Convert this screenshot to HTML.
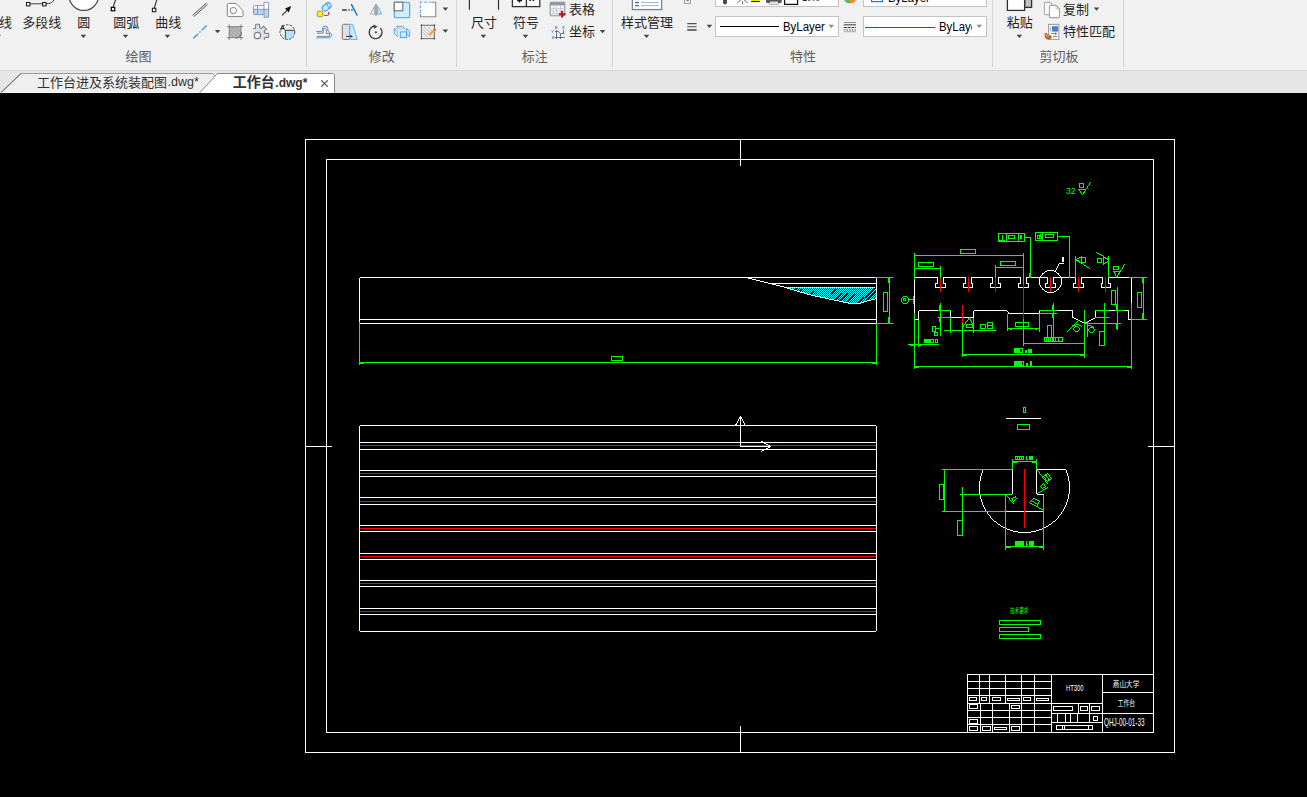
<!DOCTYPE html>
<html lang="zh"><head><meta charset="utf-8"><title>工作台.dwg</title>
<style>
html,body{margin:0;padding:0;background:#000;}
body{width:1307px;height:797px;overflow:hidden;position:relative;font-family:"Liberation Sans",sans-serif;}
#ribbon{position:absolute;left:0;top:0;width:1307px;height:70px;background:#f1f1f1;}
#ribbon .sep{position:absolute;top:0;width:1px;height:67px;background:#d2d2d2;}
#tabbar{position:absolute;left:0;top:70px;width:1307px;height:23px;background:#e6e6e6;border-top:1px solid #d9d9d9;box-sizing:border-box;}
.combo{position:absolute;box-sizing:border-box;background:#fff;border:1px solid #c3c3c3;}
.lat{position:absolute;white-space:nowrap;color:#000;line-height:1;}
.sq{display:inline-block;transform:scaleX(.95);transform-origin:0 0;}
#overlay{position:absolute;left:0;top:0;width:1307px;height:93px;}
#canvas{position:absolute;left:0;top:93px;width:1307px;height:704px;background:#000;}
#cad{position:absolute;left:0;top:0;width:1307px;height:797px;}
</style></head>
<body>
<div id="ribbon">
<div class="sep" style="left:306px"></div><div class="sep" style="left:456px"></div><div class="sep" style="left:612px"></div><div class="sep" style="left:992px"></div><div class="sep" style="left:1123px"></div><div class="combo" style="left:715px;top:-14px;width:124px;height:21px"></div><div class="combo" style="left:715px;top:16px;width:124px;height:21px"></div><div class="combo" style="left:863px;top:-14px;width:124px;height:21px"></div><div class="combo" style="left:863px;top:16px;width:124px;height:21px"></div><div class="lat" style="left:783.1px;top:20.5px;font-size:12px"><span class="sq">ByLayer</span></div><div class="lat" style="left:938.9px;top:20.5px;font-size:12px;width:32.8px;height:16px;overflow:hidden"><span class="sq">ByLayer</span></div><div class="lat" style="left:888.1px;top:-7.6px;font-size:12px"><span class="sq">ByLayer</span></div>
</div>
<div id="tabbar"></div>
<div id="canvas"></div>
<svg id="overlay" width="1307" height="93" viewBox="0 0 1307 93">
<g font-family="'Liberation Sans', 'Noto Sans CJK SC', sans-serif" font-size="13px" fill="#262626">
<text x="-1" y="26.5">线</text>
<text x="22.3" y="26.5">多段线</text>
<text x="77.3" y="26.5">圆</text>
<text x="113.3" y="26.5">圆弧</text>
<text x="155.3" y="26.5">曲线</text>
<text x="471" y="26.5">尺寸</text>
<text x="513" y="26.5">符号</text>
<text x="621" y="26.5">样式管理</text>
<text x="1006.7" y="26.5">粘贴</text>
<text x="569" y="13.9">表格</text>
<text x="569" y="35.8">坐标</text>
<text x="1063" y="13.9">复制</text>
<text x="1063" y="35.8">特性匹配</text>
</g>
<g font-family="'Liberation Sans', 'Noto Sans CJK SC', sans-serif" font-size="13px" fill="#5f5f5f">
<text x="125.5" y="61.3">绘图</text>
<text x="368.7" y="61.3">修改</text>
<text x="521.8" y="61.3">标注</text>
<text x="790" y="61.3">特性</text>
<text x="1039.5" y="61.3">剪切板</text>
</g>
<path d="M-4.5 34.8H1.1L-1.7 38Z" fill="#444"/>
<path d="M80.6 34.8H86.2L83.4 38Z" fill="#444"/>
<path d="M122.7 34.8H128.3L125.5 38Z" fill="#444"/>
<path d="M164.6 34.8H170.2L167.4 38Z" fill="#444"/>
<path d="M480.6 34.8H486.2L483.4 38Z" fill="#444"/>
<path d="M522.6 34.8H528.2L525.4 38Z" fill="#444"/>
<path d="M643.7 34.8H649.3L646.5 38Z" fill="#444"/>
<path d="M1016.6 34.8H1022.2L1019.4 38Z" fill="#444"/>
<path d="M214.8 30H220.4L217.6 33.2Z" fill="#444"/>
<path d="M442.6 7.6H448.2L445.4 10.8Z" fill="#444"/>
<path d="M442.6 29.6H448.2L445.4 32.8Z" fill="#444"/>
<path d="M599.7 30H605.3L602.5 33.2Z" fill="#444"/>
<path d="M706.6 24.7H712.2L709.4 27.9Z" fill="#444"/>
<path d="M1093.7 7.6H1099.3L1096.5 10.8Z" fill="#444"/>
<path d="M828.5 24.7H834.1L831.3 27.9Z" fill="#8a8a8a"/>
<path d="M976.5 24.7H982.1L979.3 27.9Z" fill="#8a8a8a"/>
<path d="M720 26.5H779" stroke="#000" stroke-width="1.2"/>
<path d="M865 27.5H935" stroke="#f00" stroke-width="1.2"/>
<path d="M0 94L21 73.5H212.5L214.5 75.5V94Z" fill="#efefef" stroke="#9c9c9c" stroke-width="1"/><path d="M0.4 93L20.8 73.6" stroke="#5a5a5a" stroke-width="0.9" fill="none"/><path d="M1.5 92.5H200" stroke="#fbfbfb" stroke-width="1"/>
<path d="M198.6 94L217.5 73.5H332.5Q334.5 73.5 334.5 75.5V94Z" fill="#fff" stroke="#8a8a8a" stroke-width="1"/>
<text x="37" y="86.5" font-family="'Liberation Sans', 'Noto Sans CJK SC', sans-serif" font-size="13px" fill="#333">工作台进及系统装配图</text>
<text x="232.7" y="86.6" font-family="'Liberation Sans', 'Noto Sans CJK SC', sans-serif" font-size="14px" font-weight="bold" fill="#333">工作台</text>
<text x="167.5" y="86.3" font-family="Liberation Sans, sans-serif" font-size="12.5px" fill="#333">.dwg*</text>
<text x="275.3" y="86.6" font-family="Liberation Sans, sans-serif" font-size="12px" font-weight="bold" fill="#333">.dwg*</text>
<path d="M321.2 80.3L327.8 86.8M327.8 80.3L321.2 86.8" stroke="#666" stroke-width="1.3" fill="none"/>
<path d="M29.5 3.8H42.5M46 3.8C50 3.8 53.5 2.5 54.3 -1" fill="none" stroke="#3a3f46" stroke-width="1"/>
<rect x="26.5" y="2.5" width="3.4" height="3.4" fill="#fff" stroke="#222" stroke-width="1.1"/><rect x="42.6" y="2.5" width="3.4" height="3.4" fill="#fff" stroke="#222" stroke-width="1.1"/>
<circle cx="83.8" cy="-4.4" r="14.8" fill="#fff" stroke="#3a3f46" stroke-width="1.2"/>
<path d="M113 7.5L115.8 -1M154.2 8.5L157 -1" fill="none" stroke="#3a3f46" stroke-width="1.2"/>
<rect x="111.3" y="7.4" width="3.4" height="3.4" fill="#fff" stroke="#111" stroke-width="1.3"/><rect x="152.4" y="8.3" width="3.4" height="3.4" fill="#fff" stroke="#222" stroke-width="1.1"/>
<path d="M192.6 15.4L206.4 3M193.8 16.6L207.6 4.2" fill="none" stroke="#4c4c4c" stroke-width="0.95"/>
<path d="M193.2 38.6L206.8 25.2" fill="none" stroke="#2aa6e6" stroke-width="1.4" stroke-dasharray="7 1.6 1.6 1.6"/>
<path d="M228.5 3.4H236L243 10.6V15.4Q243 16.6 241.8 16.6H228.5Q227.3 16.6 227.3 15.4V4.6Q227.3 3.4 228.5 3.4Z" fill="#fff" stroke="#808488" stroke-width="1"/><circle cx="233.3" cy="10.6" r="3.2" fill="none" stroke="#808488" stroke-width="1"/>
<rect x="229.3" y="26.8" width="11.6" height="10.8" fill="#b4b8bc"/><path d="M231 26.8L240.9 36M234.5 26.8L240.9 32.6M229.3 29L238.6 37.6M229.3 32.6L234.6 37.6" stroke="#94999e" stroke-width="0.8" fill="none"/>
<path d="M227 26.7H243.2M227 37.7H243.2M229.2 24.4V39.8M241 24.4V39.8" stroke="#666b70" stroke-width="0.8" fill="none"/><path d="M235.5 38.4Q240.6 37.6 241.6 32" stroke="#666b70" stroke-width="0.8" fill="none"/>
<path d="M254.6 5.6H264V2.4H268.6V9.3H253.5V6.7Q253.5 5.6 254.6 5.6Z" fill="#fff"/><path d="M253.5 9.3H268.6V17.2H264V14.6H254.6Q253.5 14.6 253.5 13.5Z" fill="#b9d4f0"/>
<path d="M254.6 5.6H264V2.4H268.6V17.2H264V14.6H254.6Q253.5 14.6 253.5 13.5V6.7Q253.5 5.6 254.6 5.6ZM264 5.6V14.6M257.5 5.6V14.6" fill="none" stroke="#8e9aac" stroke-width="1"/><path d="M253 9.3H269" stroke="#5aa0ee" stroke-width="1"/>
<path d="M253.2 28.5H255.1Q255.6 28.5 255.6 27.9V25Q255.6 24.2 256.4 24.2H258.8Q259.6 24.2 259.6 25V27.6Q260.2 28.4 261.4 28.4L263.5 26.3L266.7 29.4L264.4 30.6V32.6Q264.6 33.4 265.6 33.4H268Q268.7 33.4 268.7 34.1V36.7Q268.7 37.4 268 37.4H265.6Q264.6 37.6 264.4 38.7V39.7H253.2Z" fill="#dde1ea"/><path d="M253.2 28.5H255.1Q255.6 28.5 255.6 27.9V25Q255.6 24.2 256.4 24.2H258.8Q259.6 24.2 259.6 25V27.6Q260.2 28.4 261.4 28.4L263.5 26.3L266.7 29.4L264.4 30.6V32.6Q264.6 33.4 265.6 33.4H268Q268.7 33.4 268.7 34.1V36.7Q268.7 37.4 268 37.4H265.6Q264.6 37.6 264.4 38.7V39.7" fill="none" stroke="#7c818a" stroke-width="1.1"/><circle cx="257.4" cy="35.5" r="3.1" fill="#fff" stroke="#777b82" stroke-width="1.2"/>
<path d="M282.2 15.4L288 9.4" stroke="#333" stroke-width="1.1" fill="none"/><path d="M291.2 6L285 8.6L288.8 12.4Z" fill="#111"/>
<path d="M285.4 30.4H294.7A7.5 7.5 0 0 1 285.4 39.3Z" fill="#b4e4fa"/><circle cx="287.4" cy="32.1" r="7.4" fill="none" stroke="#333" stroke-width="0.9" stroke-dasharray="2.4 1.3"/><path d="M285.4 39.3V30.4H294.7" fill="none" stroke="#555" stroke-width="1.1"/>
<text x="280.2" y="29.6" font-family="Liberation Sans, sans-serif" font-size="6.5px" font-weight="bold" fill="#222">A</text>
<rect x="317.3" y="11.2" width="5.6" height="5.5" rx="1.5" fill="#ffee00" stroke="#8c8c50" stroke-width="0.9"/>
<g transform="translate(326.6 6.9) rotate(-36)"><rect x="-4.7" y="-2.9" width="9.4" height="5.8" rx="2.5" fill="#c6e8fb" stroke="#3c96e6" stroke-width="1"/><path d="M1.6 -2.8V2.8" stroke="#3c96e6" stroke-width="0.9"/></g>
<path d="M324.2 15.4H327.4Q328.7 15.4 328.7 14.2V13.4" fill="none" stroke="#a03434" stroke-width="1"/><path d="M327.3 13.6L328.8 11.7L330.2 13.6Z" fill="#a03434"/>
<rect x="342.1" y="9" width="4.7" height="2" fill="#666"/><rect x="348.1" y="9" width="1.7" height="2" fill="#4a90e0"/><rect x="351.1" y="9" width="1.7" height="2" fill="#4a90e0"/><path d="M351.2 4.2L357.3 15.5" stroke="#1a6ad0" stroke-width="1.4"/>
<path d="M370.6 14L374.7 6.2V14Z" fill="#fff" stroke="#9a9a9a" stroke-width="0.9"/><rect x="375" y="4" width="2" height="11.6" fill="#b4b4b4"/><path d="M375.2 4V15.6M376.9 4V15.6" stroke="#8e8e8e" stroke-width="0.4"/><path d="M377.4 5.9L381.6 14H377.4Z" fill="#c8eafc" stroke="#5aa8ea" stroke-width="0.9"/>
<rect x="394.3" y="2.2" width="15.4" height="15.5" rx="1.7" fill="#cdeefd" stroke="#4aa0e6" stroke-width="1.1"/><rect x="394.3" y="2.2" width="8.5" height="8.6" fill="#fff" stroke="#6a7078" stroke-width="1.1"/>
<rect x="420.3" y="2.2" width="15.4" height="14.6" fill="#fff"/><path d="M420.4 13V2.3H431.6" fill="none" stroke="#58a8f0" stroke-width="1.1" stroke-dasharray="3 1.8"/><path d="M432 2.3H435.7V16.8H420.4V14" fill="none" stroke="#8a8a8a" stroke-width="1.1"/>
<path d="M316.2 31.5H321.4Q322.4 31.4 322.4 30.2V28.2Q322.6 26.1 325.2 26.1Q327.8 26.1 327.8 28.2V31L331.6 34.1Q331.9 35.4 331.4 36.2L330.2 37.5Q329.8 37.8 329.2 37.8H316.2" fill="#e8f3fb" stroke="#4a9ae0" stroke-width="1"/>
<path d="M317 33.2H323.3V29.3Q323.3 28.4 324.2 28.4H325.4Q326.2 28.4 326.2 29.3V33.7H329.6V36.3H317" fill="#fff" stroke="#6c6c6c" stroke-width="0.9"/>
<rect x="342.3" y="24.3" width="7.6" height="15.2" rx="1.2" fill="#e0e0e0" stroke="#777" stroke-width="1"/><path d="M349.8 24.3H352.6L357.2 39.5H349.8Z" fill="#c8eafc" stroke="#5ab0f0" stroke-width="0.9"/><path d="M346.1 36.4H351.4" stroke="#333" stroke-width="1"/><path d="M353 36.4L350.6 35V37.8Z" fill="#333"/>
<path d="M380.3 27.9A6.4 6.4 0 1 1 374.2 26" fill="none" stroke="#3a424c" stroke-width="1.4"/><path d="M373.5 24.6L377.6 26.5L374 28.9Z" fill="#3a424c"/><circle cx="375.9" cy="32.3" r="1.1" fill="#3a424c"/>
<path d="M396.3 26.4H402.6L404.9 29.3H398.9Z" fill="#cdeefd" stroke="#4a9ae0" stroke-width="0.9"/><path d="M394.3 28.4L397.6 31.3V36.7L394.3 33.3Z" fill="#cdeefd" stroke="#4a9ae0" stroke-width="0.9"/><path d="M406.6 28.4L409.7 31.3V36.7L406.6 33.9Z" fill="#cdeefd" stroke="#4a9ae0" stroke-width="0.9"/><path d="M397.6 31.3L400.3 31.9V37L397.6 36.7ZM398.9 29.3H404.9L406.6 31.9H400.3Z" fill="#e2f1fa"/><rect x="400.3" y="31.9" width="6.3" height="5.7" fill="#cdeefd" stroke="#4a9ae0" stroke-width="0.9"/>
<rect x="421.5" y="25.3" width="12.9" height="13.3" fill="#ececec"/><path d="M424 26.8L432.6 35M427.4 26.8L432.6 31.6M423 29.2L431.2 37M423 32.6L427.6 37" stroke="#bcbcbc" stroke-width="0.9" fill="none"/><rect x="421.5" y="25.3" width="12.9" height="13.3" fill="none" stroke="#777" stroke-width="1.1"/>
<path d="M421.5 24.4V26M434.4 24.4V26M421.5 37.8V39.4M434.4 37.8V39.4M420.6 25.3H422.2M433.6 25.3H435.2M420.6 38.6H422.2M433.6 38.6H435.2" stroke="#555" stroke-width="1" fill="none"/>
<path d="M429.9 34.5L434.6 29.8" stroke="#f5a623" stroke-width="2.3"/><path d="M434.3 30.1L435.4 29" stroke="#b0662a" stroke-width="2.3"/><path d="M430.2 34.2L428.6 35.6" stroke="#aaa" stroke-width="1"/>
<path d="M469.4 -1V9.8M498.5 -1V9.8" stroke="#333" stroke-width="1.2" fill="none"/>
<rect x="512.4" y="-6" width="27.4" height="12.6" fill="#fff" stroke="#333" stroke-width="1.3"/><path d="M526.4 -2V6.6" stroke="#333" stroke-width="1.3"/><path d="M519.5 -1V2.6M517.2 0.6H522" stroke="#111" stroke-width="1.4"/><rect x="529.4" y="-1" width="1.6" height="2" fill="#111"/><rect x="532.6" y="-1" width="1.6" height="2" fill="#111"/>
<rect x="550.2" y="2.3" width="14.6" height="13.4" rx="1" fill="#fff" stroke="#8a9098" stroke-width="1.1"/><path d="M550.2 5.5V3.3Q550.2 2.3 551.2 2.3H563.8Q564.8 2.3 564.8 3.3V5.5Z" fill="#8d96a2"/><path d="M550.8 8.4H564.2M550.8 10.8H564.2M550.8 13.4H564.2M553.4 5.6V15.4M556.5 5.6V15.4M560.5 5.6V15.4" stroke="#c6cace" stroke-width="1" fill="none"/>
<path d="M562.1 10.9V17.6M558.8 14.2H565.6" stroke="#b81418" stroke-width="2" fill="none"/>
<path d="M556.5 30.1V39M560.4 33.7V39M555 31.5H558.2L560.8 33.7L564.6 33.2M563.5 30.1V33.2M555 37.5H564.8" stroke="#565a60" stroke-width="0.85" fill="none"/>
<g font-family="Liberation Sans, sans-serif" font-size="4.4px" font-weight="bold" fill="#4a90e2"><text x="554.7" y="29">E</text><text x="561.8" y="29">X</text><text x="551.1" y="32.9">Y</text><text x="551.8" y="39">E</text></g>
<rect x="632.4" y="-6" width="29.2" height="15.6" fill="#fff" stroke="#6a86a8" stroke-width="1.3"/><path d="M635 2.6H639M635 5.6H639" stroke="#4a6a92" stroke-width="1.3"/><path d="M641 2.6H658.8M641 5.6H658.8" stroke="#9db3cd" stroke-width="1"/>
<rect x="684.4" y="-3" width="6" height="6.4" fill="#f8f8f8" stroke="#9a9a9a" stroke-width="1"/><rect x="686" y="-1" width="2.8" height="2.2" fill="#8a8a8a"/>
<path d="M687.2 23.6H696.6M687.2 26.8H696.6" stroke="#505050" stroke-width="1.05"/><path d="M687.2 30H696.6" stroke="#444" stroke-width="1.5"/>
<path d="M723 -1V2.6Q723 4.6 725 4.6Q727 4.6 727 2.6V-1Z" fill="#4a4a4a"/>
<path d="M737.2 3L741.4 -0.6H743.6L747.8 3M742.5 1.4V4.2" stroke="#555" stroke-width="0.9" fill="none"/>
<rect x="751.2" y="-1" width="8.6" height="2" fill="#f2e400"/><rect x="751.2" y="1" width="8.6" height="1.1" fill="#2a2a2a"/>
<path d="M766 -1V1.4Q766 3 767.8 3H769.4V4.6H778.4V3H780Q781.8 3 781.8 1.4V-1Z" fill="#555"/><rect x="769.8" y="1.6" width="8.2" height="2.6" fill="#dfe3e8"/>
<rect x="784.6" y="-4" width="13" height="8.4" fill="#fff" stroke="#111" stroke-width="1.3"/>
<path d="M844 -0.5A6 6 0 0 0 850 3.3V-0.5Z" fill="#5cb85c"/><path d="M856 -0.5A6 6 0 0 1 850 3.3V-0.5Z" fill="#f08a24"/>
<rect x="871.6" y="-8" width="11" height="9.6" fill="#fff" stroke="#1f73d6" stroke-width="1.2"/>
<path d="M843.8 22.5H856" stroke="#8a8a8a" stroke-width="0.9"/><path d="M843.8 24.8H856" stroke="#4a4a4a" stroke-width="1.1"/><path d="M843.8 27.5H856" stroke="#3a3a3a" stroke-width="1.2" stroke-dasharray="3 0.8"/><path d="M843.8 29.9H856" stroke="#666" stroke-width="1" stroke-dasharray="1.6 1"/><path d="M843.8 31.7H856" stroke="#999" stroke-width="0.8"/>
<rect x="802.8" y="-1" width="4" height="1.9" fill="#111"/><rect x="808.2" y="-1" width="2" height="1.7" fill="#223"/><rect x="812.6" y="-1" width="2.2" height="1.6" fill="#1a4fa0"/><rect x="816.6" y="-1" width="2.2" height="1.7" fill="#222"/>
<rect x="1024.6" y="-6" width="7" height="13.4" fill="#c9bfb2" stroke="#2a3440" stroke-width="1.3"/><rect x="1007.4" y="-6" width="17.2" height="16.4" fill="#fff" stroke="#2a3440" stroke-width="1.3"/>
<path d="M1045.4 2.4H1050L1051.8 4.2V14.6H1045.4Q1044.4 14.6 1044.4 13.6V3.4Q1044.4 2.4 1045.4 2.4Z" fill="#fff" stroke="#a8acb0" stroke-width="1.1"/><path d="M1050.4 5.4H1056L1059.4 8.8V16.6Q1059.4 17.6 1058.4 17.6H1050.4Q1049.4 17.6 1049.4 16.6V6.4Q1049.4 5.4 1050.4 5.4Z" fill="#fff" stroke="#a0a4a8" stroke-width="1.1"/><path d="M1056 5.6V8.8H1059.2" fill="none" stroke="#b8bcc0" stroke-width="0.9"/>
<rect x="1048.6" y="24.4" width="10.2" height="15" fill="#fff" stroke="#9a9ea4" stroke-width="1.1"/><rect x="1052" y="26.2" width="6" height="5.4" fill="#4a80c0"/><path d="M1050.6 26.4V31.4" stroke="#9aa" stroke-width="0.9"/><path d="M1051 33.4H1057M1053 36.4H1057.4M1055.6 32.6V35" stroke="#667" stroke-width="0.9" fill="none"/>
<path d="M1044.4 33.6L1046 33L1052 36.2L1050.6 39L1047 39.6L1045 37.4Z" fill="#b8620f"/><path d="M1045.6 34.6L1047.4 37.4M1047.4 34.2L1049 36.6" stroke="#f6e6d0" stroke-width="0.8"/>
</svg><svg id="cad" width="1307" height="797" viewBox="0 0 1307 797" shape-rendering="crispEdges">
<defs><pattern id="hx" width="2" height="2" patternUnits="userSpaceOnUse"><rect width="2" height="2" fill="#000"/><rect x="0" y="0" width="1" height="1" fill="#0ff"/><rect x="1" y="1" width="1" height="1" fill="#0ff"/></pattern></defs>
<path d="M785 287H876V298L868 300L859 303H850L831 299L808 294Z" fill="url(#hx)"/>
<path d="M797 289L791 293M802 289L796 294M808 290L803 295M814 291L810 296M836 289L831 294M842 293L835 300M848 293L840 301M855 294L846 303M876 288L858 303M876 292L865 301" stroke="#000" stroke-width="1.4" fill="none"/>
<path d="M786 287.5H876" stroke="#fff" stroke-width="1" stroke-dasharray="1 1" fill="none"/>
<path d="M305.5 139.5H1174.5V752.5H305.5ZM326.5 159.5H1153.5V732.5H326.5ZM740.5 139V166M740.5 726V753M305 446.5H332M1148 446.5H1175M359.5 278V324M360 277.5H877M876.5 277V324M359 319.5H877M359 323.5H877M769 283.5H877M850 303.5H860M359.5 426V428M360 425.5H876M876.5 426V631M360 631.5H876M359.5 427V631M359 442.5H877M359 449.5H877M359 470.5H877M359 476.5H877M359 497.5H877M359 504.5H877M359 525.5H877M359 531.5H877M359 553.5H877M359 559.5H877M359 580.5H877M359 586.5H877M359 608.5H877M359 614.5H877M914.5 278V313M915 277.5H938M937.5 277V284M935 283.5H938M935.5 283V288M935 287.5H946M945.5 283V288M943 283.5H946M943.5 277V284M943 277.5H966M965.5 277V284M963 283.5H966M963.5 283V288M963 287.5H973M972.5 283V288M971 283.5H973M971.5 277V284M971 277.5H993M992.5 277V284M990 283.5H993M990.5 283V288M990 287.5H1001M1000.5 283V288M998 283.5H1001M998.5 277V284M998 277.5H1021M1020.5 277V284M1018 283.5H1021M1018.5 283V288M1018 287.5H1029M1028.5 283V288M1026 283.5H1029M1026.5 277V284M1026 277.5H1048M1047.5 277V284M1045 283.5H1048M1045.5 283V288M1045 287.5H1056M1055.5 283V288M1053 283.5H1056M1053.5 277V284M1053 277.5H1076M1075.5 277V284M1073 283.5H1076M1073.5 283V288M1073 287.5H1084M1083.5 283V288M1081 283.5H1084M1081.5 277V284M1081 277.5H1103M1102.5 277V284M1101 283.5H1103M1101.5 283V288M1101 287.5H1111M1110.5 283V288M1108 283.5H1111M1108.5 277V284M1108 277.5H1129M1131.5 277V303M914 319.5H919M918.5 311V320M919 310.5H951M950.5 310V318M950 317.5H974M973.5 311V318M974 310.5H1007M1008.5 312V314M1008 313.5H1040M1039.5 311V314M1040 310.5H1073M1072.5 310V318M1095.5 310V318M1095 310.5H1129M1128.5 310V320M1128 319.5H1132M1059 263.5H1064M1006 418.5H1041M1036 469.5H1066M1012.5 469V494M1005 494.5H1012M1005.5 494V512M1005 511.5H1044M1043.5 494V512M1037 494.5H1044M1036.5 469V494M967.5 674V733M967 674.5H1154M1051.5 674V733M1102.5 674V733M1102 692.5H1154M1102 713.5H1154M1051 703.5H1103M1051 713.5H1103M1051 722.5H1103M1078.5 703V714M1089.5 703V723M1057.5 713V723M1065.5 713V723M1070.5 713V723M1077.5 713V723M967 681.5H1052M967 688.5H1052M967 695.5H1052M967 703.5H1052M967 710.5H1052M967 717.5H1052M967 724.5H1052M979.5 674V704M989.5 674V704M1005.5 674V704M1021.5 674V704M1034.5 674V704M980.5 703V733M992.5 703V733M1009.5 703V733M1021.5 703V733M1034.5 703V733M969.5 697.5H976.5V700.5H969.5ZM981.5 697.5H986.5V700.5H981.5ZM992.5 697.5H1000.5V700.5H992.5ZM1007.5 698.5H1019.5V700.5H1007.5ZM1023.5 697.5H1030.5V700.5H1023.5ZM1036.5 698.5H1048.5V700.5H1036.5ZM969.5 704.5H977.5V708.5H969.5ZM1011.5 705.5H1019.5V708.5H1011.5ZM969.5 719.5H977.5V723.5H969.5ZM969.5 726.5H977.5V730.5H969.5ZM982.5 726.5H990.5V730.5H982.5ZM994.5 727.5H1006.5V729.5H994.5ZM1011.5 726.5H1019.5V730.5H1011.5ZM1053.5 706.5H1072.5V710.5H1053.5ZM1080.5 706.5H1087.5V710.5H1080.5ZM1091.5 706.5H1099.5V710.5H1091.5ZM1093.5 716.5H1097.5V720.5H1093.5ZM1056.5 725.5H1092.5V729.5H1056.5ZM1062.5 725V730M1064.5 725V730M1088.5 725V730" fill="none" stroke="#fff" stroke-width="1" stroke-linecap="butt"/>
<path d="M1059 263h1v1h-1zM1058 264h1v1h-1zM1058 265h1v1h-1zM1057 266h1v1h-1zM1057 267h1v1h-1zM1056 268h1v1h-1zM1056 269h1v1h-1zM1047 270h7v1h-7zM1055 270h1v1h-1zM1045 271h2v1h-2zM1054 271h2v1h-2zM1044 272h1v1h-1zM1056 272h1v1h-1zM1042 273h2v1h-2zM1057 273h2v1h-2zM1042 274h1v1h-1zM1058 274h1v1h-1zM1041 275h1v1h-1zM1059 275h1v1h-1zM1040 276h1v1h-1zM1060 276h1v1h-1zM360 277h1v1h-1zM745 277h3v1h-3zM915 277h1v1h-1zM1040 277h1v1h-1zM1060 277h1v1h-1zM359 278h1v1h-1zM748 278h4v1h-4zM914 278h1v1h-1zM1039 278h1v1h-1zM1061 278h1v1h-1zM752 279h4v1h-4zM1039 279h1v1h-1zM1061 279h1v1h-1zM756 280h4v1h-4zM1039 280h1v1h-1zM1061 280h1v1h-1zM760 281h4v1h-4zM1039 281h1v1h-1zM1061 281h1v1h-1zM764 282h4v1h-4zM1039 282h1v1h-1zM1061 282h1v1h-1zM768 283h4v1h-4zM1039 283h1v1h-1zM1061 283h1v1h-1zM772 284h4v1h-4zM1039 284h1v1h-1zM1061 284h1v1h-1zM776 285h4v1h-4zM1040 285h1v1h-1zM1060 285h1v1h-1zM780 286h4v1h-4zM1040 286h1v1h-1zM1060 286h1v1h-1zM784 287h3v1h-3zM1041 287h1v1h-1zM1059 287h1v1h-1zM787 288h3v1h-3zM1042 288h1v1h-1zM1058 288h1v1h-1zM790 289h4v1h-4zM1042 289h2v1h-2zM1057 289h2v1h-2zM794 290h3v1h-3zM1044 290h1v1h-1zM1056 290h1v1h-1zM797 291h3v1h-3zM1045 291h2v1h-2zM1054 291h2v1h-2zM800 292h4v1h-4zM1047 292h7v1h-7zM804 293h3v1h-3zM807 294h4v1h-4zM811 295h4v1h-4zM815 296h5v1h-5zM820 297h5v1h-5zM825 298h4v1h-4zM875 298h2v1h-2zM829 299h5v1h-5zM871 299h4v1h-4zM834 300h5v1h-5zM867 300h4v1h-4zM839 301h4v1h-4zM864 301h3v1h-3zM843 302h5v1h-5zM861 302h3v1h-3zM848 303h3v1h-3zM859 303h2v1h-2zM919 310h1v1h-1zM974 310h1v1h-1zM1006 310h1v1h-1zM1040 310h1v1h-1zM918 311h1v1h-1zM973 311h1v1h-1zM1007 311h1v1h-1zM1039 311h1v1h-1zM1008 312h1v1h-1zM1072 317h2v1h-2zM1095 317h1v1h-1zM1074 318h2v1h-2zM1093 318h2v1h-2zM1076 319h2v1h-2zM1091 319h2v1h-2zM1078 320h2v1h-2zM1089 320h2v1h-2zM1080 321h2v1h-2zM1087 321h2v1h-2zM1082 322h2v1h-2zM1085 322h2v1h-2zM1084 323h1v1h-1zM360 425h1v1h-1zM875 425h1v1h-1zM359 426h1v1h-1zM876 426h1v1h-1zM983 469h1v1h-1zM1065 469h1v1h-1zM982 470h1v1h-1zM1066 470h1v1h-1zM982 471h1v1h-1zM1066 471h1v1h-1zM982 472h1v1h-1zM1066 472h1v1h-1zM981 473h1v1h-1zM1067 473h1v1h-1zM981 474h1v1h-1zM1067 474h1v1h-1zM981 475h1v1h-1zM1067 475h1v1h-1zM980 476h1v1h-1zM1068 476h1v1h-1zM980 477h1v1h-1zM1068 477h1v1h-1zM980 478h1v1h-1zM1068 478h1v1h-1zM980 479h1v1h-1zM1068 479h1v1h-1zM980 480h1v1h-1zM1068 480h1v1h-1zM979 481h1v1h-1zM1069 481h1v1h-1zM979 482h1v1h-1zM1069 482h1v1h-1zM979 483h1v1h-1zM1069 483h1v1h-1zM979 484h1v1h-1zM1069 484h1v1h-1zM979 485h1v1h-1zM1069 485h1v1h-1zM979 486h1v1h-1zM1069 486h1v1h-1zM979 487h1v1h-1zM1069 487h1v1h-1zM979 488h1v1h-1zM1069 488h1v1h-1zM979 489h1v1h-1zM1069 489h1v1h-1zM979 490h1v1h-1zM1069 490h1v1h-1zM979 491h1v1h-1zM1069 491h1v1h-1zM979 492h1v1h-1zM1069 492h1v1h-1zM979 493h1v1h-1zM1012 493h1v1h-1zM1036 493h1v1h-1zM1069 493h1v1h-1zM980 494h1v1h-1zM1011 494h1v1h-1zM1037 494h1v1h-1zM1068 494h1v1h-1zM980 495h1v1h-1zM1068 495h1v1h-1zM980 496h1v1h-1zM1068 496h1v1h-1zM980 497h1v1h-1zM1068 497h1v1h-1zM980 498h1v1h-1zM1068 498h1v1h-1zM981 499h1v1h-1zM1067 499h1v1h-1zM981 500h1v1h-1zM1067 500h1v1h-1zM981 501h1v1h-1zM1067 501h1v1h-1zM982 502h1v1h-1zM1066 502h1v1h-1zM982 503h1v1h-1zM1066 503h1v1h-1zM982 504h1v1h-1zM1066 504h1v1h-1zM983 505h1v1h-1zM1065 505h1v1h-1zM983 506h1v1h-1zM1065 506h1v1h-1zM984 507h1v1h-1zM1064 507h1v1h-1zM984 508h1v1h-1zM1064 508h1v1h-1zM985 509h1v1h-1zM1063 509h1v1h-1zM985 510h1v1h-1zM1063 510h1v1h-1zM986 511h1v1h-1zM1062 511h1v1h-1zM987 512h1v1h-1zM1061 512h1v1h-1zM987 513h1v1h-1zM1061 513h1v1h-1zM988 514h1v1h-1zM1060 514h1v1h-1zM989 515h1v1h-1zM1059 515h1v1h-1zM990 516h1v1h-1zM1058 516h1v1h-1zM990 517h1v1h-1zM1058 517h1v1h-1zM991 518h1v1h-1zM1057 518h1v1h-1zM992 519h1v1h-1zM1056 519h1v1h-1zM993 520h1v1h-1zM1055 520h1v1h-1zM994 521h2v1h-2zM1053 521h2v1h-2zM996 522h1v1h-1zM1052 522h1v1h-1zM997 523h1v1h-1zM1051 523h1v1h-1zM998 524h2v1h-2zM1049 524h2v1h-2zM1000 525h1v1h-1zM1048 525h1v1h-1zM1001 526h2v1h-2zM1046 526h2v1h-2zM1003 527h2v1h-2zM1044 527h2v1h-2zM1005 528h2v1h-2zM1042 528h2v1h-2zM1007 529h3v1h-3zM1039 529h3v1h-3zM1010 530h3v1h-3zM1036 530h3v1h-3zM1013 531h5v1h-5zM1031 531h5v1h-5zM1018 532h13v1h-13zM359 630h1v1h-1zM876 630h1v1h-1zM360 631h1v1h-1zM875 631h1v1h-1z" fill="#fff"/>
<path d="M360 445.5H876M360 473.5H876M360 501.5H876M360 528.5H876M360 556.5H876M360 583.5H876M360 611.5H876M940.5 277V292M968.5 277V292M995.5 277V292M1050.5 277V292M1078.5 277V292M1105.5 277V292M1023.5 283V319M962.5 305V323M1024.5 469V528" fill="none" stroke="#f00" stroke-width="1" stroke-linecap="butt"/>
<path d="M359.5 322V365M876.5 324V365M359 362.5H877M360 363.5H364M872 363.5H876M611.5 356.5H622.5V360.5H611.5ZM876 277.5H893M876 323.5H893M889.5 277V324M888.5 277V283M888.5 317V323M883.5 292.5H887.5V311.5H883.5ZM914.5 253V280M914 255.5H1024M1023.5 253V284M960.5 249.5H975.5V253.5H960.5ZM914 268.5H941M940.5 266V278M918.5 262.5H933.5V266.5H918.5ZM995 267.5H1024M995.5 265V278M1000.5 261.5H1015.5V265.5H1000.5ZM998.5 233.5H1024.5V241.5H998.5ZM1006.5 233V242M1018.5 233V242M1002.5 235V241M998 240.5H1005M1008.5 235.5H1014.5V238.5H1008.5ZM1020.5 235V239M1021.5 235V239M1024 237.5H1031M1030.5 237V278M1029.5 273V278M1035.5 232.5H1057.5V240.5H1035.5ZM1042.5 232V241M1045.5 234.5H1053.5V237.5H1045.5ZM1041.5 234.5L1039.5 235.5H1037.5V238.5H1041.5V236.5H1039.5V237.5M1057 236.5H1070M1069.5 236V278M1075.5 256V278M1081.5 256V264M1081.5 257.5H1085.5V262.5H1081.5ZM1108.5 256V278M1097.5 258.5H1101.5V262.5H1097.5ZM1103.5 256V265M1113.5 266.5H1118.5V269.5H1113.5ZM1113 271.5H1121M903 296.5H907M908.5 298V302M903 303.5H907M901.5 298V302M903.5 298.5H905.5V300.5H903.5ZM908 299.5H914M913.5 296V304M1129 277.5H1147M1131 319.5H1147M1143.5 277V320M1142.5 277V283M1142.5 313V319M1137.5 292.5H1141.5V307.5H1137.5ZM1111.5 290.5H1115.5V304.5H1111.5ZM1117.5 287V330M1131.5 303V369M914.5 313V369M914 366.5H1132M915 367.5H919M1127 367.5H1131M962 354.5H1085M963 355.5H967M1080 355.5H1084M962.5 323V357M1084.5 310V358M1023.5 319V346M1023 343.5H1085M918.5 320V347M908 344.5H939M910 345.5H914M918 345.5H922M940.5 303V336M938 310.5H951M938 317.5H951M939.5 305V310M939.5 317V322M932.5 326.5H935.5V331.5H932.5ZM934.5 332.5H937.5V335.5H934.5ZM936 328.5H939M950.5 318V333M973.5 318V333M944 330.5H996M966.5 324.5H972.5V327.5H966.5ZM980.5 324.5H985.5V328.5H980.5ZM987.5 322.5H992.5V328.5H987.5ZM987 325.5H993M1007.5 314V331M1007 328.5H1040M1039.5 314V332M1007.5 328.5L1012 329.5M1039.5 328.5L1035 329.5M1015.5 322.5H1028.5V326.5H1015.5ZM1053.5 303V341M1039 310.5H1057M1039 313.5H1057M1052.5 305V310M1052.5 313V318M1047.5 325.5H1051.5V337.5H1047.5ZM1044.5 337.5H1062.5V341.5H1044.5ZM1046.5 338V341M1048.5 338V341M1050.5 338V341M1052.5 338V341M1055.5 338V341M1058.5 338V341M1087.5 321V337M1075 326.5H1078M1079.5 328V330M1075 331.5H1078M1073.5 328V330M1090 327.5H1093M1094.5 329V331M1090 332.5H1093M1088.5 329V331M1084 323.5H1121M1095 317.5H1109M1095 310.5H1109M1115 310.5H1125M1104.5 303V332M1099.5 331.5H1104.5V345.5H1099.5ZM1116.5 304V310M1116.5 323V329M930.5 339.5H933.5V342.5H930.5ZM935.5 339.5H937.5V342.5H935.5ZM1019.5 348.5H1022.5V352.5H1019.5ZM1021.5 361.5H1023.5V365.5H1021.5ZM1023.5 407.5H1025.5V412.5H1023.5ZM1017.5 424.5H1029.5V429.5H1017.5ZM942 469.5H1013M960 494.5H1011M942 511.5H1005M944.5 469V512M939.5 484.5H943.5V499.5H939.5ZM962.5 487V521M957.5 520.5H962.5V535.5H957.5ZM1005.5 495V550M1043.5 495V550M1005 546.5H1044M1006 547.5H1011M1039 547.5H1043M1012.5 459V470M1036.5 459V470M1012 461.5H1037M1013 462.5H1017M1032 462.5H1036M1015.5 456.5H1023.5V459.5H1015.5ZM1017.5 456V460M1019.5 456V460M1021.5 456V460M1026.5 456V460M1026 459.5H1028M1020.5 541.5H1021.5V545.5H1020.5ZM1022.5 541.5H1023.5V545.5H1022.5ZM1026.5 541V546M1026 544.5H1028M999.5 620.5H1040.5V624.5H999.5ZM999.5 627.5H1028.5V631.5H999.5ZM999.5 634.5H1040.5V638.5H999.5ZM1079.5 183.5H1083.5V187.5H1079.5ZM1078 189.5H1086" fill="none" stroke="#0f0" stroke-width="1" stroke-linecap="butt"/>
<path d="M1090 182h1v1h-1zM1089 183h1v1h-1zM1089 184h1v1h-1zM1088 185h1v1h-1zM1087 186h1v1h-1zM1087 187h1v1h-1zM1086 188h1v1h-1zM1085 189h1v1h-1zM1079 190h1v1h-1zM1085 190h1v1h-1zM1080 191h1v1h-1zM1084 191h1v1h-1zM1080 192h1v1h-1zM1083 192h2v1h-2zM1081 193h1v1h-1zM1083 193h1v1h-1zM1082 194h1v1h-1zM1096 252h1v1h-1zM1097 253h2v1h-2zM1099 254h2v1h-2zM1101 255h2v1h-2zM1081 256h1v1h-1zM1103 256h1v1h-1zM1079 257h2v1h-2zM1104 257h2v1h-2zM1077 258h2v1h-2zM1105 258h3v1h-3zM1076 259h1v1h-1zM1107 259h2v1h-2zM1076 260h3v1h-3zM1108 260h1v1h-1zM1077 261h3v1h-3zM1107 261h1v1h-1zM1079 262h3v1h-3zM1105 262h2v1h-2zM1081 263h2v1h-2zM1104 263h1v1h-1zM1083 264h1v1h-1zM1103 264h1v1h-1zM1124 264h1v1h-1zM1084 265h2v1h-2zM1123 265h1v1h-1zM1086 266h1v1h-1zM1123 266h1v1h-1zM1087 267h2v1h-2zM1122 267h1v1h-1zM1089 268h1v1h-1zM1122 268h1v1h-1zM1121 269h1v1h-1zM1120 270h1v1h-1zM1113 271h1v1h-1zM1120 271h1v1h-1zM1114 272h1v1h-1zM1119 272h1v1h-1zM1114 273h1v1h-1zM1118 273h2v1h-2zM1115 274h1v1h-1zM1118 274h1v1h-1zM1115 275h1v1h-1zM1117 275h1v1h-1zM1116 276h2v1h-2zM1116 277h1v1h-1zM903 296h1v1h-1zM906 296h1v1h-1zM902 297h1v1h-1zM907 297h1v1h-1zM901 298h1v1h-1zM908 298h1v1h-1zM901 301h1v1h-1zM908 301h1v1h-1zM902 302h1v1h-1zM907 302h1v1h-1zM903 303h1v1h-1zM906 303h1v1h-1zM969 317h1v1h-1zM968 318h2v1h-2zM968 319h1v1h-1zM970 319h1v1h-1zM967 320h1v1h-1zM970 320h1v1h-1zM1078 320h1v1h-1zM966 321h1v1h-1zM971 321h1v1h-1zM1077 321h1v1h-1zM965 322h1v1h-1zM971 322h1v1h-1zM1076 322h1v1h-1zM965 323h1v1h-1zM972 323h1v1h-1zM1075 323h1v1h-1zM964 324h1v1h-1zM1074 324h1v1h-1zM1076 324h3v1h-3zM963 325h1v1h-1zM1072 325h4v1h-4zM1079 325h2v1h-2zM1088 325h3v1h-3zM963 326h1v1h-1zM1072 326h1v1h-1zM1075 326h1v1h-1zM1077 326h1v1h-1zM1081 326h1v1h-1zM1091 326h2v1h-2zM962 327h1v1h-1zM1071 327h1v1h-1zM1074 327h1v1h-1zM1078 327h1v1h-1zM1090 327h1v1h-1zM1092 327h2v1h-2zM1070 328h1v1h-1zM1073 328h1v1h-1zM1079 328h1v1h-1zM1089 328h1v1h-1zM1093 328h1v1h-1zM1069 329h1v1h-1zM1073 329h1v1h-1zM1079 329h1v1h-1zM1088 329h1v1h-1zM1094 329h1v1h-1zM1068 330h1v1h-1zM1074 330h1v1h-1zM1078 330h1v1h-1zM1088 330h1v1h-1zM1094 330h1v1h-1zM1067 331h1v1h-1zM1075 331h1v1h-1zM1077 331h1v1h-1zM1089 331h1v1h-1zM1093 331h1v1h-1zM1090 332h1v1h-1zM1092 332h1v1h-1zM1037 470h1v1h-1zM1038 471h1v1h-1zM1039 472h1v1h-1zM1039 473h1v1h-1zM1047 473h1v1h-1zM1040 474h1v1h-1zM1045 474h2v1h-2zM1048 474h1v1h-1zM1041 475h1v1h-1zM1044 475h3v1h-3zM1049 475h1v1h-1zM1042 476h2v1h-2zM1046 476h1v1h-1zM1049 476h1v1h-1zM1042 477h1v1h-1zM1044 477h1v1h-1zM1047 477h1v1h-1zM1050 477h1v1h-1zM1043 478h1v1h-1zM1045 478h1v1h-1zM1048 478h1v1h-1zM1051 478h1v1h-1zM1044 479h2v1h-2zM1048 479h3v1h-3zM1045 480h2v1h-2zM1048 480h2v1h-2zM1045 481h1v1h-1zM1047 481h1v1h-1zM1046 482h1v1h-1zM1043 483h1v1h-1zM1047 483h1v1h-1zM1042 484h1v1h-1zM1044 484h1v1h-1zM1041 485h1v1h-1zM1044 485h1v1h-1zM1040 486h1v1h-1zM1045 486h1v1h-1zM1041 487h1v1h-1zM1043 487h2v1h-2zM1047 487h1v1h-1zM1042 488h1v1h-1zM1045 488h2v1h-2zM1043 489h2v1h-2zM1042 490h1v1h-1zM1040 491h2v1h-2zM1038 492h2v1h-2zM1037 493h1v1h-1zM1006 495h1v1h-1zM1007 496h1v1h-1zM1015 496h1v1h-1zM1008 497h1v1h-1zM1013 497h3v1h-3zM1009 498h1v1h-1zM1011 498h2v1h-2zM1016 498h1v1h-1zM1033 498h2v1h-2zM1009 499h1v1h-1zM1012 499h1v1h-1zM1015 499h1v1h-1zM1032 499h1v1h-1zM1035 499h2v1h-2zM1010 500h1v1h-1zM1012 500h1v1h-1zM1014 500h1v1h-1zM1031 500h1v1h-1zM1037 500h2v1h-2zM1011 501h1v1h-1zM1013 501h1v1h-1zM1030 501h1v1h-1zM1032 501h2v1h-2zM1039 501h1v1h-1zM1012 502h1v1h-1zM1029 502h1v1h-1zM1034 502h1v1h-1zM1038 502h1v1h-1zM1013 503h1v1h-1zM1030 503h2v1h-2zM1035 503h2v1h-2zM1038 503h1v1h-1zM1032 504h2v1h-2zM1037 504h1v1h-1zM1034 505h2v1h-2zM1037 505h1v1h-1zM1036 506h2v1h-2zM1038 507h1v1h-1zM1039 508h2v1h-2zM1041 509h2v1h-2zM1043 510h1v1h-1z" fill="#0f0"/>
<path d="M740.5 416V447M740 446.5H771M735.5 425.5L740.5 416.5M745.5 425.5L740.5 416.5M761.5 441.5L770.5 446.5M761.5 451.5L770.5 446.5" fill="none" stroke="#fff" stroke-width="1"/>
<rect x="1062" y="257" width="2" height="5" fill="#fff"/><rect x="924" y="339" width="6" height="4" fill="#0f0"/><rect x="1014" y="348" width="5" height="5" fill="#0f0"/><rect x="1025" y="350" width="2" height="3" fill="#0f0"/><rect x="1028" y="349" width="4" height="4" fill="#0f0"/><rect x="1014" y="361" width="7" height="5" fill="#0f0"/><rect x="1026" y="363" width="2" height="3" fill="#0f0"/><rect x="1030" y="361" width="2" height="5" fill="#0f0"/><rect x="1029" y="456" width="4" height="4" fill="#0f0"/><rect x="1015" y="541" width="5" height="5" fill="#0f0"/><rect x="1029" y="541" width="5" height="5" fill="#0f0"/>
<g shape-rendering="auto" fill="#fff" font-family="'Liberation Sans', 'Noto Sans CJK SC', sans-serif"><text x="1112.8" y="687.2" font-size="8px" textLength="26.5" lengthAdjust="spacingAndGlyphs">燕山大学</text><text x="1117.8" y="706" font-size="8px" textLength="17.3" lengthAdjust="spacingAndGlyphs">工作台</text></g>
<g shape-rendering="auto" fill="#fff" font-family="Liberation Sans, sans-serif"><text x="1066" y="690.6" font-size="9px" textLength="17.5" lengthAdjust="spacingAndGlyphs">HT300</text><text x="1104" y="725.8" font-size="11px" textLength="40.5" lengthAdjust="spacingAndGlyphs">QHJ-00-01-33</text></g>
<text x="1066" y="193.5" shape-rendering="auto" font-family="'Liberation Sans', sans-serif" font-size="9px" fill="#0f0" textLength="9.5" lengthAdjust="spacingAndGlyphs">32</text>
<text x="1010.1" y="612.5" shape-rendering="auto" font-family="'Liberation Sans', 'Noto Sans CJK SC', sans-serif" font-size="7px" fill="#0f0" textLength="18.1" lengthAdjust="spacingAndGlyphs">技术要求</text>
</svg>
</body></html>
